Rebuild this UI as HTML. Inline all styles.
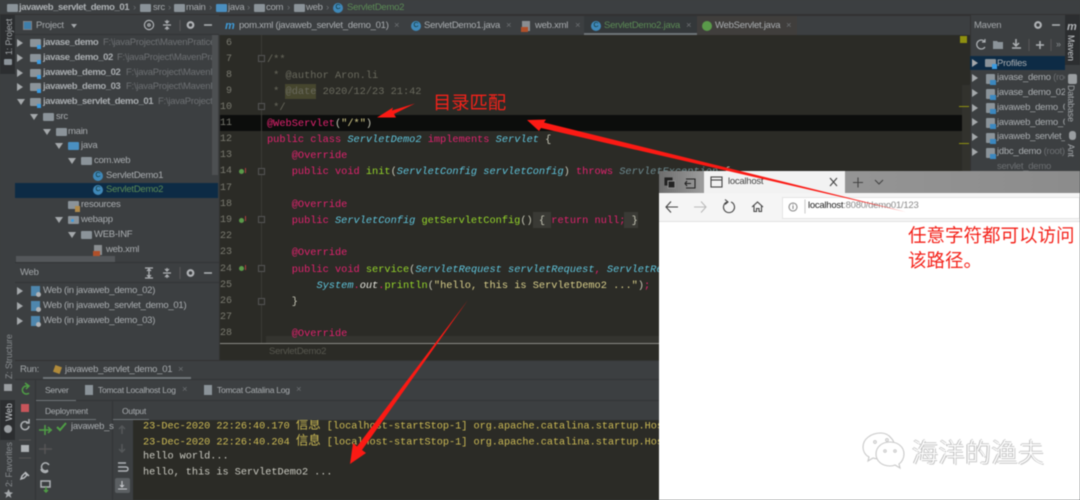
<!DOCTYPE html>
<html><head><meta charset="utf-8"><style>
*{box-sizing:border-box}
html,body{margin:0;padding:0;width:1080px;height:500px;overflow:hidden;background:#3c3f41}
#r{position:relative;width:1080px;height:500px;overflow:hidden;font-family:"Liberation Sans","Noto Sans CJK SC",sans-serif;font-size:9.5px;letter-spacing:-.25px;color:#a9adb0;filter:blur(.45px)}
.a{position:absolute}
.t{position:absolute;white-space:pre;line-height:14px;transform:translateY(-7px)}
.b{font-weight:bold;letter-spacing:-.4px}
.sm{font-size:8.5px;letter-spacing:-.25px}
.m{font-family:"Liberation Mono","Noto Sans CJK SC",monospace;font-size:10.3px;letter-spacing:0;color:#c9c9b8;transform:translateY(-6px)}
.g{color:#6d7073}.k{color:#e0226e}.c{color:#5fc4dc;font-style:italic}.f{color:#95d62a}.s{color:#d9cf8b}.an{color:#e0226e}.cm{color:#6a6a5e}
.n{position:absolute;left:219px;width:13px;text-align:right;letter-spacing:0;color:#7a7a70;font-family:"Liberation Mono",monospace;font-size:10px;line-height:14px;transform:translateY(-6px)}
.tri{position:absolute;width:0;height:0;border-top:4px solid transparent;border-bottom:4px solid transparent;border-left:6px solid #a4a8ab}
.dn{position:absolute;width:0;height:0;border-left:4px solid transparent;border-right:4px solid transparent;border-top:6px solid #a4a8ab}
.fo{position:absolute;width:11px;height:8px;background:#8b9399;border-radius:1px}
.cb{position:absolute;width:10px;height:10px;border-radius:50%;background:#3f88b8;color:#133;font-size:7px;line-height:10px;text-align:center;letter-spacing:0}
.v{position:absolute;white-space:pre;transform-origin:0 0;transform:rotate(-90deg);font-size:8.8px;letter-spacing:-.1px;color:#a4a8ab;line-height:12px}
.o{font-family:"Liberation Mono","Noto Sans CJK SC",monospace;font-size:10.2px;letter-spacing:0;transform:translateY(-5.5px)}
.o i{font-style:normal;font-size:12.4px}
.gi{position:absolute;width:5px;height:5px;border-radius:50%;background:#5b9a4a}
.gu{position:absolute;width:1px;height:5px;background:#b04040}
.fd{position:absolute;left:258px;width:7px;height:7px;border:1px solid #555;background:#2b2b26}
</style></head><body><div id="r">

<!-- breadcrumb bar -->
<div class="a" style="left:0;top:0;width:1080px;height:15px;background:#3c3f41;border-bottom:1px solid #323232"></div>
<div class="fo" style="left:7px;top:4px"></div>
<div class="t b" style="left:19px;top:8px;color:#aeb2b5">javaweb_servlet_demo_01</div>
<div class="t g" style="left:133px;top:8px">›</div>
<div class="fo" style="left:140px;top:4px"></div><div class="t" style="left:153px;top:8px">src</div>
<div class="t g" style="left:168px;top:8px">›</div>
<div class="fo" style="left:174px;top:4px"></div><div class="t" style="left:186px;top:8px">main</div>
<div class="t g" style="left:209px;top:8px">›</div>
<div class="fo" style="left:216px;top:4px;background:#4a8fc0"></div><div class="t" style="left:228px;top:8px">java</div>
<div class="t g" style="left:247px;top:8px">›</div>
<div class="fo" style="left:254px;top:4px"></div><div class="t" style="left:266px;top:8px">com</div>
<div class="t g" style="left:287px;top:8px">›</div>
<div class="fo" style="left:294px;top:4px"></div><div class="t" style="left:306px;top:8px">web</div>
<div class="t g" style="left:326px;top:8px">›</div>
<div class="cb" style="left:333px;top:3px">C</div>
<div class="t" style="left:347px;top:8px;color:#5b8a55">ServletDemo2</div>

<!-- left stripe -->
<div class="a" style="left:0;top:15px;width:15px;height:485px;background:#3c3f41"></div>
<div class="a" style="left:0;top:15px;width:15px;height:59px;background:#2c2e30"></div>
<div class="v" style="left:3px;top:55px">1: Project</div>
<div class="fo" style="left:4px;top:59px;width:8px;height:6px"></div>
<div class="v" style="left:3px;top:379px;color:#888c8f">Z: Structure</div>
<div class="a" style="left:4px;top:384px;width:8px;height:7px;background:#9a9ea1"></div>
<div class="a" style="left:0;top:400px;width:15px;height:40px;background:#2c2e30"></div>
<div class="v" style="left:3px;top:421px;color:#c8cbce">Web</div>
<div class="a" style="left:4px;top:425px;width:8px;height:8px;border-radius:50%;background:#9a9ea1"></div>
<div class="v" style="left:3px;top:487px;color:#888c8f">2: Favorites</div>
<div class="a" style="left:4px;top:489px;width:9px;height:9px;background:#a4a8ab;clip-path:polygon(50% 0,65% 35%,100% 40%,72% 62%,82% 100%,50% 78%,18% 100%,28% 62%,0 40%,35% 35%)"></div>

<!-- project panel -->
<div class="a" style="left:15px;top:15px;width:204px;height:345px;background:#3c3f41"></div>
<div class="a" style="left:15px;top:34px;width:204px;height:1px;background:#323436"></div>
<div class="a" style="left:23px;top:21px;width:9px;height:9px;border:1px solid #7d8185;background:#3e7eaa"></div>
<div class="t" style="left:36px;top:26px;color:#a4a8ab">Project</div>
<div class="a" style="left:71px;top:24px;width:0;height:0;border-left:3px solid transparent;border-right:3px solid transparent;border-top:4px solid #a4a8ab"></div>
<svg class="a" style="left:142px;top:18px" width="76" height="16" fill="none" stroke="#b0b3b6" stroke-width="1.2"><circle cx="7" cy="7" r="4.6"/><circle cx="7" cy="7" r="1.2"/><path d="M21 7h8M25 2v3M23 3l2 2 2-2M25 12V9M23 11l2-2 2 2"/><path d="M38 2v11" stroke="#555"/><circle cx="48.500" cy="7" r="2.800" stroke-width="2.200"/><path d="M62 7h8" stroke-width="1.500"/></svg>

<div class="tri" style="left:17px;top:39px"></div><div class="fo" style="left:30px;top:39px"></div><div class="a" style="left:37px;top:45px;width:4px;height:4px;background:#3b9be0"></div>
<div class="t b" style="left:43px;top:43px">javase_demo</div><div class="t g" style="left:103px;top:43px">F:\javaProject\MavenPratice</div>
<div class="tri" style="left:17px;top:54px"></div><div class="fo" style="left:30px;top:54px"></div><div class="a" style="left:37px;top:60px;width:4px;height:4px;background:#3b9be0"></div>
<div class="t b" style="left:43px;top:58px">javase_demo_02</div><div class="t g" style="left:117px;top:58px">F:\javaProject\MavenPrat</div>
<div class="tri" style="left:17px;top:69px"></div><div class="fo" style="left:30px;top:69px"></div><div class="a" style="left:37px;top:75px;width:4px;height:4px;background:#3b9be0"></div>
<div class="t b" style="left:43px;top:73px">javaweb_demo_02</div><div class="t g" style="left:126px;top:73px">F:\javaProject\MavenP</div>
<div class="tri" style="left:17px;top:83px"></div><div class="fo" style="left:30px;top:83px"></div><div class="a" style="left:37px;top:89px;width:4px;height:4px;background:#3b9be0"></div>
<div class="t b" style="left:43px;top:87px">javaweb_demo_03</div><div class="t g" style="left:126px;top:87px">F:\javaProject\MavenP</div>
<div class="dn" style="left:17px;top:99px"></div><div class="fo" style="left:30px;top:98px"></div><div class="a" style="left:37px;top:104px;width:4px;height:4px;background:#3b9be0"></div>
<div class="t b" style="left:43px;top:102px">javaweb_servlet_demo_01</div><div class="t g" style="left:158px;top:102px">F:\javaProject\</div>
<div class="dn" style="left:30px;top:114px"></div><div class="fo" style="left:43px;top:113px"></div><div class="t" style="left:56px;top:117px">src</div>
<div class="dn" style="left:43px;top:129px"></div><div class="fo" style="left:56px;top:128px"></div><div class="t" style="left:68px;top:132px">main</div>
<div class="dn" style="left:55px;top:143px"></div><div class="fo" style="left:68px;top:142px;background:#4a8fc0"></div><div class="t" style="left:81px;top:146px">java</div>
<div class="dn" style="left:68px;top:158px"></div><div class="fo" style="left:81px;top:157px"></div><div class="t" style="left:94px;top:161px">com.web</div>
<div class="cb" style="left:93px;top:171px">C</div><div class="t" style="left:106px;top:176px">ServletDemo1</div>
<div class="a" style="left:15px;top:183px;width:203px;height:15px;background:#0d2b45"></div>
<div class="cb" style="left:93px;top:185px">C</div><div class="t" style="left:106px;top:190px;color:#5b8a55">ServletDemo2</div>
<div class="fo" style="left:68px;top:201px"></div><div class="a" style="left:75px;top:206px;width:5px;height:6px;background:#b08a4a"></div><div class="t" style="left:81px;top:205px">resources</div>
<div class="dn" style="left:55px;top:217px"></div><div class="fo" style="left:68px;top:216px"></div><div class="a" style="left:71px;top:219px;width:3px;height:3px;border-radius:50%;background:#3b9be0"></div><div class="t" style="left:81px;top:220px">webapp</div>
<div class="dn" style="left:68px;top:232px"></div><div class="fo" style="left:81px;top:231px"></div><div class="t" style="left:94px;top:235px">WEB-INF</div>
<div class="a" style="left:94px;top:245px;width:8px;height:10px;background:#8a8e91"></div><div class="a" style="left:93px;top:251px;width:7px;height:5px;background:#b0502a"></div><div class="t" style="left:106px;top:250px">web.xml</div>
<div class="a" style="left:212px;top:35px;width:6px;height:140px;background:#4d5052"></div>
<div class="a" style="left:16px;top:256px;width:99px;height:6px;background:#54575a"></div>

<!-- web panel -->
<div class="a" style="left:15px;top:262px;width:204px;height:98px;background:#3c3f41;border-top:1px solid #323436"></div>
<div class="a" style="left:15px;top:282px;width:204px;height:1px;background:#323436"></div>
<div class="t" style="left:20px;top:273px;color:#a4a8ab">Web</div>
<svg class="a" style="left:142px;top:265px" width="76" height="16" fill="none" stroke="#b0b3b6" stroke-width="1.2"><path d="M3 3h8M3 13h8M7 5v6M5 6l2-2 2 2M5 10l2 2 2-2"/><path d="M21 8h8M25 3v3M23 4l2 2 2-2M25 13v-3M23 12l2-2 2 2"/><path d="M38 2v12" stroke="#555"/><circle cx="48.500" cy="8" r="2.800" stroke-width="2.200"/><path d="M62 8h8" stroke-width="1.500"/></svg>
<div class="tri" style="left:17px;top:287px"></div><div class="a" style="left:31px;top:286px;width:9px;height:10px;background:#4e86ad"></div><div class="a" style="left:36px;top:292px;width:5px;height:5px;border-radius:50%;background:#b0b3b6"></div><div class="t" style="left:43px;top:291px">Web (in javaweb_demo_02)</div>
<div class="tri" style="left:17px;top:302px"></div><div class="a" style="left:31px;top:301px;width:9px;height:10px;background:#4e86ad"></div><div class="a" style="left:36px;top:307px;width:5px;height:5px;border-radius:50%;background:#b0b3b6"></div><div class="t" style="left:43px;top:306px">Web (in javaweb_servlet_demo_01)</div>
<div class="tri" style="left:17px;top:317px"></div><div class="a" style="left:31px;top:316px;width:9px;height:10px;background:#4e86ad"></div><div class="a" style="left:36px;top:322px;width:5px;height:5px;border-radius:50%;background:#b0b3b6"></div><div class="t" style="left:43px;top:321px">Web (in javaweb_demo_03)</div>

<!-- editor tabs -->
<div class="a" style="left:219px;top:15px;width:751px;height:20px;background:#3c3f41;border-top:1px solid #323232"></div>
<div class="a" style="left:584px;top:16px;width:113px;height:19px;background:#34383a;border-bottom:2px solid #6f7478"></div>
<div class="a" style="left:697px;top:16px;width:100px;height:19px;background:#403e3c"></div>
<div class="t" style="left:225px;top:26px;color:#3f9ad6;font-weight:bold;font-style:italic;font-size:11px">m</div>
<div class="t" style="left:239px;top:26px">pom.xml (javaweb_servlet_demo_01)</div><div class="t g" style="left:394px;top:26px">×</div>
<div class="cb" style="left:411px;top:21px">C</div><div class="t" style="left:424px;top:26px">ServletDemo1.java</div><div class="t g" style="left:506px;top:26px">×</div>
<div class="a" style="left:522px;top:21px;width:8px;height:10px;background:#8a8e91"></div><div class="a" style="left:521px;top:27px;width:7px;height:5px;background:#b0502a"></div><div class="t" style="left:535px;top:26px">web.xml</div><div class="t g" style="left:575px;top:26px">×</div>
<div class="cb" style="left:591px;top:21px">C</div><div class="t" style="left:604px;top:26px;color:#5b8a55">ServletDemo2.java</div><div class="t g" style="left:686px;top:26px">×</div>
<div class="a" style="left:702px;top:21px;width:10px;height:10px;border-radius:50%;background:#5a9a4a"></div><div class="t" style="left:715px;top:26px">WebServlet.java</div><div class="t g" style="left:786px;top:26px">×</div>

<!-- editor -->
<div class="a" style="left:219px;top:35px;width:751px;height:309px;background:#2b2b26"></div>
<div class="a" style="left:219px;top:115px;width:743px;height:16px;background:#0c0d0c"></div>
<div class="a" style="left:261px;top:35px;width:1px;height:309px;background:#3a3a35"></div>
<div class="a" style="left:962px;top:85px;width:8px;height:259px;background:#32322d"></div>
<div class="a" style="left:960px;top:36px;width:7px;height:7px;background:#8f9010"></div>
<div class="a" style="left:959px;top:106px;width:10px;height:1px;background:#8f9010"></div>
<div class="a" style="left:959px;top:143px;width:10px;height:1px;background:#8f9010"></div>
<div class="a" style="left:266px;top:336px;width:696px;height:8px;background:#34342f"></div>

<div class="n" style="top:42.500px">6</div><div class="n" style="top:58.500px">7</div><div class="n" style="top:75px">8</div><div class="n" style="top:91px">9</div><div class="n" style="top:107px">10</div><div class="n" style="top:123px">11</div><div class="n" style="top:139px">12</div><div class="n" style="top:155px">13</div><div class="n" style="top:171px">14</div><div class="n" style="top:188px">17</div><div class="n" style="top:204px">18</div><div class="n" style="top:220px">19</div><div class="n" style="top:236px">22</div><div class="n" style="top:252px">23</div><div class="n" style="top:269px">24</div><div class="n" style="top:285px">25</div><div class="n" style="top:301px">26</div><div class="n" style="top:317px">27</div><div class="n" style="top:333px">28</div>

<div class="fd" style="top:55px"></div><div class="fd" style="top:103px"></div><div class="fd" style="top:168px"></div><div class="fd" style="top:216px"></div><div class="fd" style="top:265px"></div><div class="fd" style="top:298px"></div>
<div class="gi" style="left:239px;top:169px"></div><div class="gu" style="left:245px;top:168px"></div>
<div class="gi" style="left:239px;top:218px"></div><div class="gu" style="left:245px;top:216px"></div>
<div class="gi" style="left:239px;top:266px"></div><div class="gu" style="left:245px;top:265px"></div>

<div class="t m cm" style="left:267px;top:58.500px">/**</div>
<div class="t m cm" style="left:267px;top:75px"> * @author Aron.li</div>
<div class="a" style="left:285px;top:84px;width:31px;height:15px;background:#46462e"></div>
<div class="t m cm" style="left:267px;top:91px"> * @date 2020/12/23 21:42</div>
<div class="t m cm" style="left:267px;top:107px"> */</div>
<div class="t m" style="left:267px;top:123px"><span class="an">@WebServlet</span>(<span class="s">"/*"</span>)</div>
<div class="t m" style="left:267px;top:139px"><span class="k">public class </span><span class="c">ServletDemo2 </span><span class="k">implements </span><span class="c">Servlet </span>{</div>
<div class="t m" style="left:267px;top:155px">    <span class="an">@Override</span></div>
<div class="t m" style="left:267px;top:171px">    <span class="k">public void </span><span class="f">init</span>(<span class="c">ServletConfig servletConfig</span>) <span class="k">throws </span><span class="c" style="color:#6d8a90">ServletException</span> {</div>
<div class="t m" style="left:267px;top:204px">    <span class="an">@Override</span></div>
<div class="a" style="left:533px;top:212px;width:18px;height:16px;background:#3a3a35"></div>
<div class="a" style="left:624px;top:212px;width:14px;height:16px;background:#3a3a35"></div>
<div class="t m" style="left:267px;top:220px">    <span class="k">public </span><span class="c">ServletConfig </span><span class="f">getServletConfig</span>() { <span class="k">return null;</span> }</div>
<div class="t m" style="left:267px;top:252px">    <span class="an">@Override</span></div>
<div class="t m" style="left:267px;top:269px">    <span class="k">public void </span><span class="f">service</span>(<span class="c">ServletRequest servletRequest</span><span class="k">, </span><span class="c">ServletRequest</span></div>
<div class="t m" style="left:267px;top:285px">        <span class="c">System</span><span class="k">.</span><i style="color:#e8e8e0">out</i><span class="k">.</span><span class="f">println</span>(<span class="s">"hello, this is ServletDemo2 ..."</span>)<span class="k">;</span></div>
<div class="t m" style="left:267px;top:301px">    }</div>
<div class="t m" style="left:267px;top:333px">    <span class="an">@Override</span></div>

<!-- editor bottom crumb -->
<div class="a" style="left:219px;top:343px;width:751px;height:1px;background:#8a8a85"></div>
<div class="a" style="left:219px;top:344px;width:751px;height:16px;background:#2b2b26"></div>
<div class="t" style="left:269px;top:352px;color:#57574f">ServletDemo2</div>
<div class="a" style="left:219px;top:35px;width:1px;height:325px;background:#323232"></div>

<!-- maven -->
<div class="a" style="left:970px;top:15px;width:110px;height:156px;background:#3c3f41;border-left:1px solid #323232"></div>
<div class="t" style="left:974px;top:26px;color:#a4a8ab">Maven</div>
<svg class="a" style="left:1030px;top:18px" width="34" height="16" fill="none" stroke="#b0b3b6"><circle cx="8" cy="7" r="2.800" stroke-width="2.200"/><path d="M22 7h8" stroke-width="1.500"/></svg>
<svg class="a" style="left:972px;top:37px" width="90" height="16" fill="none" stroke="#aeb2b5" stroke-width="1.200"><path d="M13 5a4.500 4.500 0 1 0 0 5M13 2v3h-3"/><path d="M21 4h4l1 1h5v7H21z" fill="#8b9399" stroke="none"/><path d="M44 2v6M41 6l3 3 3-3M40 11h9" stroke-width="1.500"/><path d="M57 2v12" stroke="#555"/><path d="M68 4v8M64 8h8" stroke-width="1.500"/><path d="M79 2v12" stroke="#555"/></svg>
<div class="t" style="left:1056px;top:44px;color:#8a8e91;font-size:9px">»</div>
<div class="a" style="left:970px;top:56px;width:95px;height:14px;background:#0d2b45"></div>
<div class="tri" style="left:972px;top:59px"></div><div class="fo" style="left:985px;top:59px"></div><div class="t" style="left:997px;top:63.500px">Profiles</div>
<div class="a" style="left:992px;top:64px;width:5px;height:5px;background:#3b9be0"></div>
<div class="tri" style="left:972px;top:74px"></div><div class="fo" style="left:986px;top:74px;width:9px;height:10px"></div><div class="a" style="left:990px;top:80px;width:6px;height:5px;background:#3b88c0"></div><div class="t" style="left:997px;top:78px">javase_demo <span class="g">(root)</span></div>
<div class="tri" style="left:972px;top:89px"></div><div class="fo" style="left:986px;top:89px;width:9px;height:10px"></div><div class="a" style="left:990px;top:95px;width:6px;height:5px;background:#3b88c0"></div><div class="t" style="left:997px;top:93px">javase_demo_02</div>
<div class="tri" style="left:972px;top:104px"></div><div class="fo" style="left:986px;top:103px;width:9px;height:10px"></div><div class="a" style="left:990px;top:109px;width:6px;height:5px;background:#3b88c0"></div><div class="t" style="left:997px;top:108px">javaweb_demo_02</div>
<div class="tri" style="left:972px;top:118px"></div><div class="fo" style="left:986px;top:118px;width:9px;height:10px"></div><div class="a" style="left:990px;top:124px;width:6px;height:5px;background:#3b88c0"></div><div class="t" style="left:997px;top:122.500px">javaweb_demo_03</div>
<div class="tri" style="left:972px;top:133px"></div><div class="fo" style="left:986px;top:133px;width:9px;height:10px"></div><div class="a" style="left:990px;top:139px;width:6px;height:5px;background:#3b88c0"></div><div class="t" style="left:997px;top:137px">javaweb_servlet_demo</div>
<div class="tri" style="left:972px;top:148px"></div><div class="fo" style="left:986px;top:148px;width:9px;height:10px"></div><div class="a" style="left:990px;top:154px;width:6px;height:5px;background:#3b88c0"></div><div class="t" style="left:997px;top:152px">jdbc_demo <span class="g">(root)</span></div>
<div class="t g" style="left:997px;top:167px">servlet_demo</div>
<!-- right stripe -->
<div class="a" style="left:1065px;top:15px;width:15px;height:156px;overflow:hidden;background:#3c3f41"><div class="a" style="left:0;top:0;width:15px;height:50px;background:#2c2e30"></div><div class="t" style="left:2px;top:12px;font-weight:bold;font-style:italic;color:#b0b3b6;font-size:11px">m</div><div class="v" style="left:12px;top:20px;transform:rotate(90deg);color:#c8cbce">Maven</div><div class="a" style="left:3px;top:59px;width:9px;height:10px;background:#9a9ea1;border-radius:2px"></div><div class="v" style="left:12px;top:70px;transform:rotate(90deg)">Database</div><div class="a" style="left:4px;top:116px;width:7px;height:9px;background:#9a9ea1;border-radius:3px"></div><div class="v" style="left:12px;top:129px;transform:rotate(90deg)">Ant</div></div>

<!-- run panel -->
<div class="a" style="left:15px;top:360px;width:644px;height:140px;background:#3c3f41;border-top:1px solid #323232"></div>
<div class="t" style="left:20px;top:370px;color:#a4a8ab">Run:</div>
<div class="a" style="left:54px;top:366px;width:7px;height:7px;background:#b08a3a;transform:rotate(20deg)"></div>
<div class="t" style="left:65px;top:370px">javaweb_servlet_demo_01</div><div class="t g" style="left:178px;top:370px">×</div>
<div class="a" style="left:43px;top:377px;width:148px;height:2px;background:#6f7478"></div>
<div class="a" style="left:15px;top:379px;width:644px;height:1px;background:#323436"></div>
<div class="a" style="left:15px;top:380px;width:21px;height:120px;border-right:1px solid #323436"></div>
<div class="t sm" style="left:45px;top:390px">Server</div>
<div class="a" style="left:36px;top:400px;width:40px;height:1px;background:#6f7478"></div>
<div class="a" style="left:85px;top:385px;width:8px;height:10px;background:#8b9399"></div><div class="t sm" style="left:98px;top:390px">Tomcat Localhost Log</div><div class="t g" style="left:182px;top:390px">×</div>
<div class="a" style="left:204px;top:385px;width:8px;height:10px;background:#8b9399"></div><div class="t sm" style="left:217px;top:390px">Tomcat Catalina Log</div><div class="t g" style="left:296px;top:390px">×</div>
<div class="a" style="left:76px;top:400px;width:583px;height:1px;background:#323436"></div>
<div class="t sm" style="left:45px;top:411px">Deployment</div>
<div class="a" style="left:36px;top:419px;width:60px;height:1px;background:#6f7478"></div>
<div class="a" style="left:112px;top:400px;width:1px;height:100px;background:#323436"></div>
<div class="t sm" style="left:122px;top:411px">Output</div>
<div class="a" style="left:113px;top:419px;width:36px;height:1px;background:#6f7478"></div>
<svg class="a" style="left:15px;top:380px" width="118" height="120" fill="none" stroke-width="1.500">
<path d="M14 7a4 4 0 1 0 0 6M10 3l4 3-3 3" stroke="#4f9e45"/>
<rect x="6" y="24" width="8" height="8" fill="#c7555a" stroke="none"/>
<path d="M14 46a4 4 0 1 1-1-3M14 39v4h-3" stroke="#aeb2b5"/>
<rect x="6" y="65" width="8" height="7" fill="#aeb2b5" stroke="none"/><path d="M4 60h12M4 78h12" stroke="#555" stroke-width="1"/>
<path d="M7 96l3-3 2 2-3 3-3 1zM10 92l4 4" stroke="#b8bbbe"/>
<path d="M24 50h13M33 47l3 3-3 3M30 45v10" stroke="#4f9e45"/>
<path d="M24 69h13M30 64v10" stroke="#555"/>
<path d="M42 47l3 3 6-7" stroke="#4f9e45" stroke-width="2"/>
<path d="M34 85a4 4 0 1 0-1 5M26 89a4 4 0 0 0 7 2" stroke="#aeb2b5"/>
<rect x="26" y="101" width="9" height="6" stroke="#aeb2b5"/><path d="M31 107v5M29 110l2 2 2-2" stroke="#4f9e45"/>
<path d="M107 46v8M104 49l3-3 3 3M107 64v8M104 69l3 3 3-3" stroke="#55585a"/>
<path d="M103 83h8M103 87h8a2 2 0 0 1 0 4h-4M103 91h6" stroke="#aeb2b5"/>
<rect x="100" y="98" width="15" height="15" rx="2" fill="#5b5f62" stroke="none"/><path d="M103 109h9M107 101v6M105 105l2 2 2-2" stroke="#c8cbce" stroke-width="1.100"/>
</svg>
<div class="t" style="left:71px;top:427px">javaweb_s</div>

<!-- console -->
<div class="a" style="left:133px;top:420px;width:526px;height:80px;background:#2b2b26"></div>
<div class="a" style="left:133px;top:420px;width:526px;height:80px;overflow:hidden">
<div class="t o" style="left:10px;top:4px;color:#cdbb55">23-Dec-2020 22:26:40.170 <i>信息</i> [localhost-startStop-1] org.apache.catalina.startup.Host</div>
<div class="t o" style="left:10px;top:20px;color:#cdbb55">23-Dec-2020 22:26:40.204 <i>信息</i> [localhost-startStop-1] org.apache.catalina.startup.Host</div>
<div class="t o" style="left:10px;top:36px;color:#c9c9c0">hello world...</div>
<div class="t o" style="left:10px;top:52px;color:#c9c9c0">hello, this is ServletDemo2 ...</div>
</div>

<!-- browser -->
<div class="a" style="left:659px;top:171px;width:421px;height:329px;background:#fff;overflow:hidden">
 <div class="a" style="left:0;top:0;width:421px;height:22px;background:linear-gradient(90deg,#6d6d6d,#9a9a9a 10%,#8c8c8c)"></div>
 <div class="a" style="left:45px;top:0;width:141px;height:22px;background:#f2f2f2"></div>
 <div class="a" style="left:0;top:22px;width:421px;height:29px;background:#f5f5f5;border-bottom:1px solid #e2e2e2"></div>
 <div class="a" style="left:123px;top:26px;width:298px;height:22px;background:#fff;border:1px solid #e4e4e4"></div>
 <div class="t" style="left:69px;top:11px;color:#444">localhost</div>
 <div class="t" style="left:149px;top:35px;color:#333"><span style="color:#222">localhost</span><span style="color:#888">:8080/demo01/123</span></div>
 <svg class="a" style="left:0;top:0" width="250" height="50" fill="none" stroke="#444" stroke-width="1.100">
  <rect x="6" y="7" width="7" height="7" fill="#222" stroke="#222"/><rect x="9" y="10" width="7" height="7" fill="#222" stroke="#8c8c8c"/>
  <path d="M27 8h9v9h-9M32 12.500h-6M28 10l-2 2.500 2 2.500" stroke="#222"/>
  <rect x="52" y="6" width="11" height="10"/><path d="M52 9h11"/>
  <path d="M171 7l7 8M178 7l-7 8"/>
  <path d="M194 11.500h10M199 6.500v10M216 9l4 4 4-4"/>
  <g transform="translate(0,-1.500)">
  <path d="M7 37.500h12M12 32l-5 5.500 5 5.500"/>
  <path d="M35 37.500h12M42 32l5 5.500-5 5.500" stroke="#bbb"/>
  <path d="M68 32.500a5.500 5.500 0 1 0 4 0M66 30l3 2.500-3 2.500"/>
  <path d="M93 37.500l5.500-5 5.500 5M95 36v6h2.500v-3h2.500v3h2.500v-6"/>
  <circle cx="134" cy="37.500" r="4" stroke="#888"/><path d="M134 36v3.500M134 34.500v.8" stroke="#888"/>
  <path d="M146 30v14" stroke="#ccc"/>
  </g>
 </svg>
</div>

<!-- annotations -->
<svg class="a" style="left:0;top:0" width="1080" height="500">
 <polygon fill="#fb1a14" points="377,117.500 393,107.500 392,110.500 415,103.500 394,114 396,117.500"/>
 <polygon fill="#fb1a14" points="527,120 546,119.500 544,122.500 906,212 541,128 539,131"/>
 <polygon fill="#fb1a14" points="350,464 353,443 357,446.500 468,300 362,450 366,453"/>
</svg>
<div class="t" style="left:433px;top:103px;color:#f4221a;font-size:18.300px;letter-spacing:0;line-height:22px;transform:translateY(-11px)">目录匹配</div>
<div class="t" style="left:908px;top:236px;color:#f4221a;font-size:18.500px;letter-spacing:0;line-height:24px;transform:translateY(-12px)">任意字符都可以访问</div>
<div class="t" style="left:908px;top:261px;color:#f4221a;font-size:18.500px;letter-spacing:0;line-height:24px;transform:translateY(-12px)">该路径。</div>

<!-- watermark -->
<svg class="a" style="left:860px;top:430px" width="50" height="40" fill="#fff" stroke="#c9c9c9" stroke-width="1.100">
 <path d="M21 3C11 3 3 9 3 17c0 4 2 8 6 10l-1 4 5-3c2 .5 4 1 6 1 1-1 1-2 2-3 12 0 16-11 11-17-3-4-7-6-11-6z"/>
 <path d="M30 12c-8 0-14 5-14 12s6 12 14 12c2 0 3 0 5-1l5 3-1-4c3-2 5-6 5-10 0-7-6-12-14-12z"/>
 <circle cx="15" cy="12" r="1.300"/><circle cx="27" cy="10" r="1.300"/><circle cx="25" cy="21" r="1.200"/><circle cx="35" cy="21" r="1.200"/>
</svg>
<div class="t" style="left:912px;top:452px;font-size:26px;line-height:32px;transform:translateY(-16px);color:#fff;letter-spacing:.5px;text-shadow:-1px 0 0 #bbb,0 -1px 0 #ccc,1px 1px 0 #c9c9c9;font-family:'Noto Sans CJK SC',sans-serif;font-weight:300">海洋的渔夫</div>

</div></body></html>
